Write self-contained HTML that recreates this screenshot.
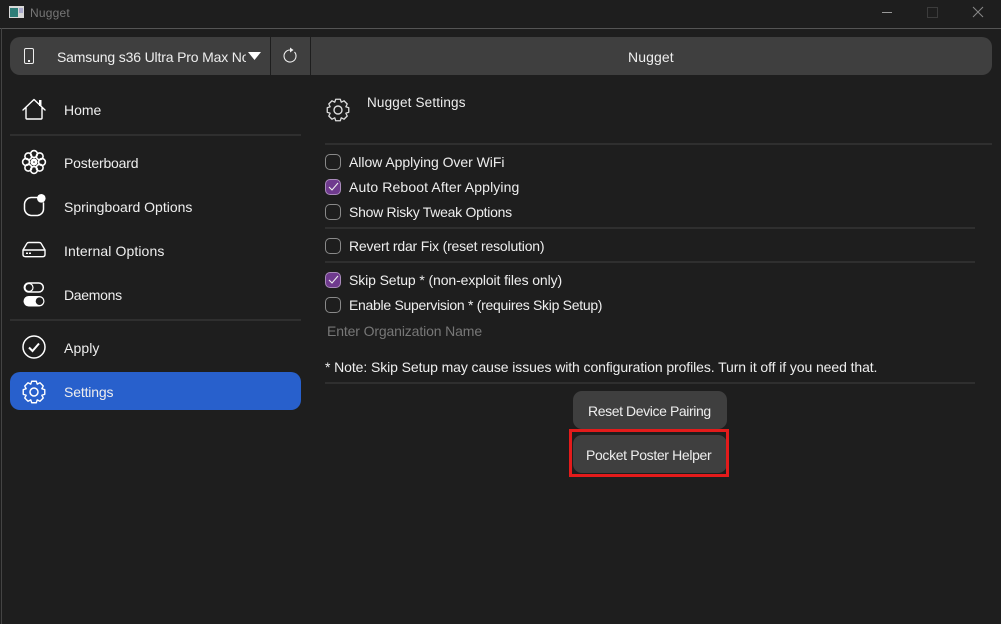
<!DOCTYPE html>
<html><head><meta charset="utf-8"><style>
html,body{margin:0;padding:0;background:#1e1e1e;}
#r{position:relative;width:1001px;height:624px;overflow:hidden;background:#1e1e1e;font-family:"Liberation Sans",sans-serif;font-size:14px;color:#eee;}
.t{position:absolute;white-space:nowrap;line-height:18px;height:18px;}
.b{position:absolute;}
.hr{position:absolute;height:2px;background:#2f2f2f;}
.cb{position:absolute;left:325px;width:14px;height:14px;border:1px solid #8a8a8a;border-radius:5px;}
.cb.on{background:#6f3a8e;border-color:#a98abb;}
svg{position:absolute;overflow:visible;}
</style></head><body><div id="r">
<div class="b" style="left:0;top:28px;width:1001px;height:1px;background:#555"></div>
<div class="b" style="left:1px;top:28px;width:1px;height:596px;background:#444"></div>
<svg style="left:9px;top:6px" width="15" height="12"><rect width="15" height="12" fill="#d8d8d8"/><rect x="1" y="2" width="8" height="9" fill="#2e7d78"/><rect x="10" y="2" width="4" height="5" fill="#aac"/></svg>
<div class="t" style="left:30px;top:4px;font-size:12px;color:#777;letter-spacing:.2px">Nugget</div>
<div class="b" style="left:882px;top:12px;width:10px;height:1px;background:#999"></div>
<div class="b" style="left:927px;top:7px;width:9px;height:9px;border:1px solid #3c3c3c"></div>
<svg style="left:972px;top:6px" width="12" height="12"><path d="M1 1L11 11M11 1L1 11" stroke="#888" fill="none"/></svg>
<div class="b" style="left:10px;top:37px;width:982px;height:38px;background:#3f3f3f;border-radius:10px"></div>
<div class="b" style="left:270px;top:37px;width:1px;height:38px;background:#1e1e1e"></div>
<div class="b" style="left:310px;top:37px;width:1px;height:38px;background:#1e1e1e"></div>
<svg style="left:24px;top:48px" width="11" height="16"><rect x=".5" y=".5" width="9" height="15" rx="1.5" fill="none" stroke="#eee"/><rect x="4" y="12" width="2" height="2" fill="#eee"/></svg>
<div class="t" style="left:57px;top:48px;width:189px;overflow:hidden;letter-spacing:-.16px">Samsung s36 Ultra Pro Max Note</div>
<svg style="left:248px;top:52px" width="13" height="8"><path d="M0 0H13L6.500 8Z" fill="#fff"/></svg>
<svg style="left:283px;top:49px" width="14" height="15"><path d="M11.500 3A6 6 0 1 1 7 1" fill="none" stroke="#eee" stroke-width="1.100"/><path d="M7 -1.500L10.500 1L7 3.500Z" fill="#eee"/></svg>
<div class="t" style="left:628px;top:48px;letter-spacing:.1px">Nugget</div>

<svg style="left:22px;top:98px" width="24" height="23"><path d="M1 12L12 1.500L23 12M4 9.500V20Q4 21 5 21H19Q20 21 20 20V9.500" fill="none" stroke="#fff" stroke-width="1.400" stroke-linejoin="round" stroke-linecap="round"/><rect x="17" y="2" width="2.500" height="6" fill="#fff"/></svg>
<div class="t" style="left:64px;top:101px;letter-spacing:0">Home</div>
<div class="hr" style="left:10px;top:134px;width:291px"></div>
<svg style="left:22px;top:150px" width="24" height="24" viewBox="-12 -12 24 24"><g fill="none" stroke="#fff" stroke-width="1.600"><circle cx="0" cy="-8" r="3.400"/><circle cx="5.700" cy="-5.700" r="3.400"/><circle cx="8" cy="0" r="3.400"/><circle cx="5.700" cy="5.700" r="3.400"/><circle cx="0" cy="8" r="3.400"/><circle cx="-5.700" cy="5.700" r="3.400"/><circle cx="-8" cy="0" r="3.400"/><circle cx="-5.700" cy="-5.700" r="3.400"/></g><circle r="3.500" fill="#fff"/><circle r=".8" fill="#1e1e1e"/></svg>
<div class="t" style="left:64px;top:154px;letter-spacing:-.17px">Posterboard</div>
<svg style="left:23px;top:194px" width="24" height="24"><path d="M14 3.500H8A7 7 0 0 0 1.500 10V15A7 7 0 0 0 8 21.500H14.500A6.500 6.500 0 0 0 20.500 15V9" fill="none" stroke="#fff" stroke-width="1.500" stroke-linecap="round"/><circle cx="18.300" cy="4.300" r="4.300" fill="#fff"/></svg>
<div class="t" style="left:64px;top:198px;letter-spacing:0">Springboard Options</div>
<svg style="left:22px;top:241px" width="24" height="21"><path d="M1 9L5 2.300Q5.500 1.500 7 1.500H17Q18.500 1.500 19 2.300L23 9V13.500Q23 15.700 20.500 15.700H3.500Q1 15.700 1 13.500ZM1 9H23" fill="none" stroke="#fff" stroke-width="1.400"/><rect x="4" y="11.500" width="2" height="1.500" fill="#fff"/><rect x="7" y="11.500" width="2" height="1.500" fill="#fff"/></svg>
<div class="t" style="left:64px;top:242px;letter-spacing:.1px">Internal Options</div>
<svg style="left:23px;top:282px" width="22" height="25"><rect x="1.300" y="1" width="19" height="9" rx="4.500" fill="none" stroke="#fff" stroke-width="1.500"/><circle cx="6" cy="5.500" r="4" fill="none" stroke="#fff" stroke-width="1.200"/><rect x=".5" y="14" width="21" height="10.500" rx="5.200" fill="#fff"/><circle cx="16.500" cy="19.200" r="3.800" fill="#1e1e1e"/></svg>
<div class="t" style="left:64px;top:286px;letter-spacing:-.3px">Daemons</div>
<div class="hr" style="left:10px;top:319px;width:291px"></div>
<svg style="left:22px;top:335px" width="24" height="24"><circle cx="12" cy="12" r="11" fill="none" stroke="#fff" stroke-width="1.500"/><path d="M7 12.500L10.500 16L17 8.500" fill="none" stroke="#fff" stroke-width="2"/></svg>
<div class="t" style="left:64px;top:339px;letter-spacing:.1px">Apply</div>
<div class="b" style="left:10px;top:372px;width:291px;height:38px;background:#2860cc;border-radius:10px"></div>
<svg style="left:22px;top:380px" width="24" height="24" viewBox="-12 -12 24 24"><path d="M2.290 -10.760L3.250 -7.850L5.990 -9.230L9.230 -5.990L7.850 -3.250L10.760 -2.290L10.760 2.290L7.850 3.250L9.230 5.990L5.990 9.230L3.250 7.850L2.290 10.760L-2.290 10.760L-3.250 7.850L-5.990 9.230L-9.230 5.990L-7.850 3.250L-10.760 2.290L-10.760 -2.290L-7.850 -3.250L-9.230 -5.990L-5.990 -9.230L-3.250 -7.850L-2.290 -10.760Z" fill="none" stroke="#fff" stroke-width="1.400" stroke-linejoin="round"/><circle r="4" fill="none" stroke="#fff" stroke-width="1.500"/></svg>
<div class="t" style="left:64px;top:383px;letter-spacing:-.15px">Settings</div>

<svg style="left:326px;top:98px" width="24" height="24" viewBox="-12 -12 24 24"><path d="M2.290 -10.760L3.250 -7.850L5.990 -9.230L9.230 -5.990L7.850 -3.250L10.760 -2.290L10.760 2.290L7.850 3.250L9.230 5.990L5.990 9.230L3.250 7.850L2.290 10.760L-2.290 10.760L-3.250 7.850L-5.990 9.230L-9.230 5.990L-7.850 3.250L-10.760 2.290L-10.760 -2.290L-7.850 -3.250L-9.230 -5.990L-5.990 -9.230L-3.250 -7.850L-2.290 -10.760Z" fill="none" stroke="#ddd" stroke-width="1.300" stroke-linejoin="round"/><circle r="4" fill="none" stroke="#ddd" stroke-width="1.400"/></svg>
<div class="t" style="left:367px;top:94px;font-size:13.500px;letter-spacing:.17px">Nugget Settings</div>
<div class="hr" style="left:325px;top:143px;width:667px"></div>
<div class="cb" style="top:154px"></div>
<div class="t" style="left:349px;top:153px;letter-spacing:-.04px">Allow Applying Over WiFi</div>
<div class="cb on" style="top:179px"></div>
<svg style="left:328px;top:182px" width="11" height="10"><path d="M1 5L4 8L10 1" fill="none" stroke="#eee" stroke-width="1.100"/></svg>
<div class="t" style="left:349px;top:178px;letter-spacing:.12px">Auto Reboot After Applying</div>
<div class="cb" style="top:204px"></div>
<div class="t" style="left:349px;top:203px;letter-spacing:-.27px">Show Risky Tweak Options</div>
<div class="hr" style="left:325px;top:227px;width:650px"></div>
<div class="cb" style="top:238px"></div>
<div class="t" style="left:349px;top:237px;letter-spacing:-.18px">Revert rdar Fix (reset resolution)</div>
<div class="hr" style="left:325px;top:261px;width:650px"></div>
<div class="cb on" style="top:272px"></div>
<svg style="left:328px;top:275px" width="11" height="10"><path d="M1 5L4 8L10 1" fill="none" stroke="#eee" stroke-width="1.100"/></svg>
<div class="t" style="left:349px;top:271px;letter-spacing:-.11px">Skip Setup * (non-exploit files only)</div>
<div class="cb" style="top:297px"></div>
<div class="t" style="left:349px;top:296px;letter-spacing:-.29px">Enable Supervision * (requires Skip Setup)</div>
<div class="t" style="left:327px;top:322px;color:#777;letter-spacing:-.13px">Enter Organization Name</div>
<div class="t" style="left:325px;top:358px;letter-spacing:-.09px">* Note: Skip Setup may cause issues with configuration profiles. Turn it off if you need that.</div>
<div class="hr" style="left:325px;top:382px;width:650px"></div>
<div class="b" style="left:573px;top:391px;width:154px;height:38px;background:#3f3f3f;border-radius:9px"></div>
<div class="t" style="left:588px;top:402px;letter-spacing:-.4px">Reset Device Pairing</div>
<div class="b" style="left:573px;top:435px;width:154px;height:38px;background:#3f3f3f;border-radius:9px"></div>
<div class="t" style="left:586px;top:446px;letter-spacing:-.35px">Pocket Poster Helper</div>
<div class="b" style="left:569px;top:429px;width:154px;height:42px;border:3px solid #e31b1b"></div>
</div></body></html>
